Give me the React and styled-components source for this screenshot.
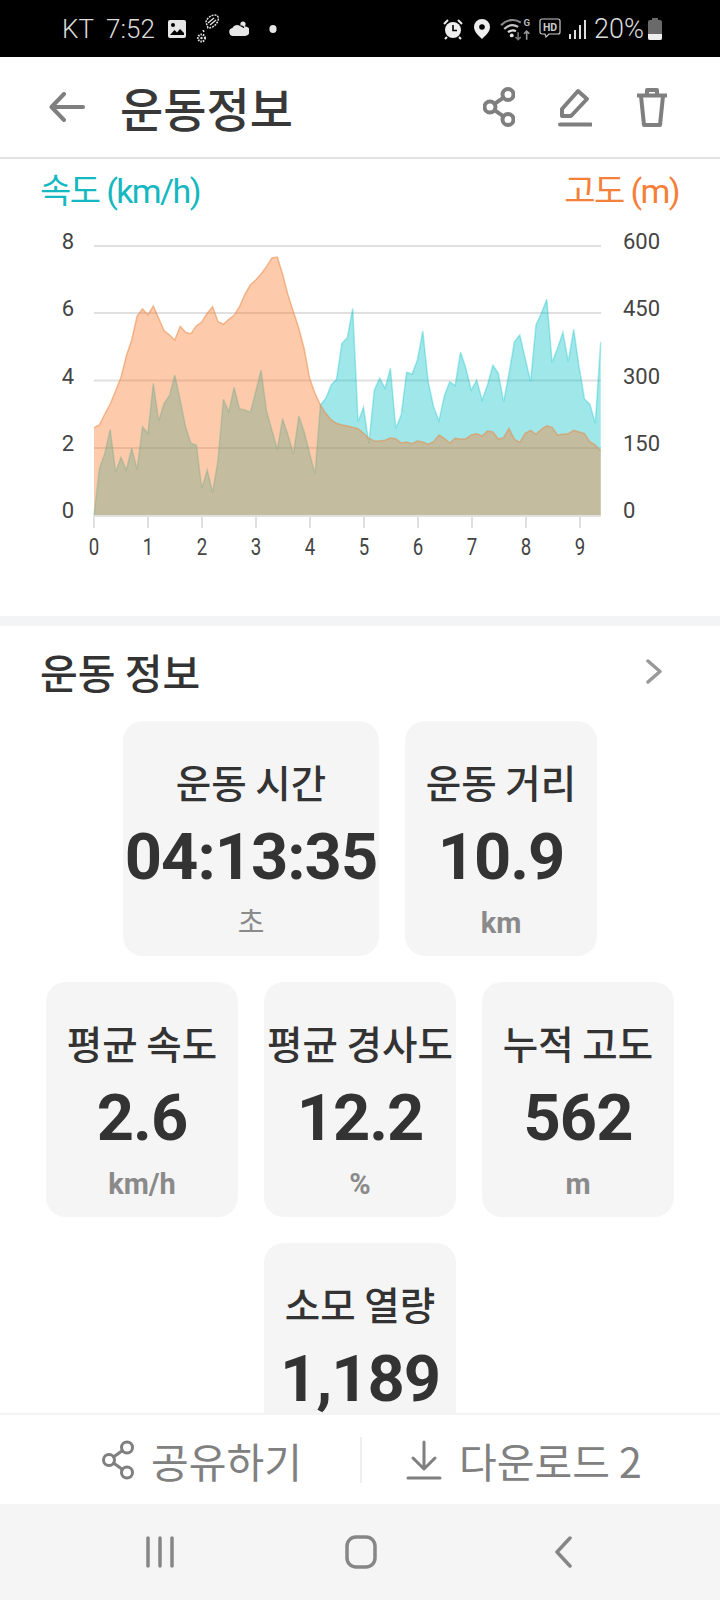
import React from "react";
import styled, { createGlobalStyle } from "styled-components";

const KR = `"Noto Sans CJK KR", "Noto Sans", sans-serif`;
const NUM = `Roboto, "Noto Sans CJK KR", sans-serif`;

const Global = createGlobalStyle`
  html, body { margin: 0; padding: 0; background: #fff; }
  * { box-sizing: border-box; }
`;

const Page = styled.div`
  width: 720px;
  height: 1600px;
  display: flex;
  flex-direction: column;
  overflow: hidden;
  font-family: ${KR};
  background: #fff;
`;

const StatusBar = styled.div`
  height: 57px;
  background: #000;
  color: #dcdcdc;
  display: flex;
  align-items: center;
  justify-content: space-between;
  padding: 0 58px 0 62px;
  flex: none;
`;
const StatusGroup = styled.div`
  display: flex;
  align-items: center;
  gap: ${(p) => p.$gap || 0}px;
  margin-left: ${(p) => p.$ml || 0}px;
`;
const StatusText = styled.span`
  font-family: ${NUM};
  font-size: ${(p) => p.$size || 26}px;
  font-weight: 300;
  line-height: 30px;
  white-space: pre;
`;
const StatusSpacer = styled.span`
  width: ${(p) => p.$w}px;
  flex: none;
`;

const Header = styled.header`
  height: 102px;
  flex: none;
  display: flex;
  align-items: center;
  padding: 0 51px 0 49px;
  border-bottom: 2px solid #e2e2e2;
`;
const HeaderTitle = styled.h1`
  margin: 0 0 0 35px;
  font-size: 47px;
  line-height: 60px;
  font-weight: 500;
  color: #383838;
  flex: 1;
`;
const HeaderActions = styled.div`
  display: flex;
  align-items: center;
  gap: 43px;
`;

const ChartSection = styled.section`
  flex: none;
  height: 457px;
  display: flex;
  flex-direction: column;
`;
const LegendRow = styled.div`
  height: 58px;
  padding: 5px 41px 0 40px;
  display: flex;
  justify-content: space-between;
  align-items: center;
`;
const LegendLabel = styled.span`
  font-family: ${NUM};
  font-size: 34px;
  line-height: 54px;
  font-weight: 400;
  letter-spacing: -1.6px;
  color: ${(p) => p.$color};
`;
const ChartSvg = styled.svg`
  display: block;
  width: 720px;
  height: 399px;
`;

const Gap = styled.div`
  height: 10px;
  flex: none;
  background: #f3f4f5;
`;

const Content = styled.main`
  flex: 1;
  min-height: 0;
  overflow: hidden;
`;
const SectionHead = styled.div`
  height: 95px;
  padding: 0 58px 5px 40px;
  display: flex;
  align-items: center;
  justify-content: space-between;
`;
const SectionTitle = styled.h2`
  margin: 0;
  font-size: 41px;
  line-height: 56px;
  font-weight: 500;
  color: #333;
`;
const Cards = styled.div`
  display: flex;
  flex-wrap: wrap;
  justify-content: center;
  gap: 26px;
  padding: 0 46px;
`;
const Card = styled.div`
  width: ${(p) => (p.$wide ? 256 : 192)}px;
  height: 235px;
  background: #f5f5f5;
  border-radius: 20px;
  display: flex;
  flex-direction: column;
  align-items: center;
  padding-top: 38px;
`;
const CardTitle = styled.div`
  font-size: 38.5px;
  line-height: 44px;
  font-weight: 500;
  color: #333;
  white-space: nowrap;
`;
const CardValue = styled.div`
  margin-top: 19px;
  font-family: ${NUM};
  font-size: 65px;
  line-height: 70px;
  font-weight: 700;
  color: #333;
  letter-spacing: -1px;
  white-space: nowrap;
`;
const CardUnit = styled.div`
  margin-top: 16px;
  font-family: ${NUM};
  font-size: 29px;
  line-height: 30px;
  font-weight: ${(p) => (p.$light ? 400 : 700)};
  color: #8a8a8a;
`;

const ActionBar = styled.div`
  flex: none;
  height: 91px;
  border-top: 2px solid #f3f3f3;
  display: grid;
  grid-template-columns: 360px 2px 1fr;
  align-items: center;
  background: #fff;
`;
const ActionButton = styled.div`
  display: flex;
  align-items: center;
  padding-left: ${(p) => p.$pad}px;
  gap: 17px;
  color: #808080;
  font-size: 41px;
  line-height: 56px;
`;
const ActionDivider = styled.div`
  width: 2px;
  height: 46px;
  background: #f0f0f0;
`;

const NavBar = styled.nav`
  flex: none;
  height: 96px;
  background: #f5f5f5;
  display: grid;
  grid-template-columns: 199px 209px auto;
  align-items: center;
  justify-content: start;
  padding: 0 0 0 146px;
`;

const teal = [1065,925,880,808,935,892,930,865,928,800,820,670,782,730,706,645,720,800,850,855,985,930,997,900,718,755,682,746,750,757,695,630,752,810,868,776,825,882,768,815,880,943,735,715,675,658,550,533,445,785,742,850,690,655,685,625,805,765,637,642,600,513,665,740,782,708,665,677,576,625,690,660,720,675,615,640,725,640,545,525,595,665,495,460,418,607,565,517,605,508,620,717,733,790,545];
const orange = [803,795,762,732,693,652,588,540,468,447,464,438,475,512,525,540,499,517,521,497,486,460,440,485,493,478,466,440,403,375,360,342,320,294,291,343,405,455,505,567,655,700,735,760,780,790,795,798,802,806,820,835,843,843,841,834,836,849,846,851,843,846,853,845,825,835,849,835,838,836,825,821,828,813,816,837,833,805,838,847,820,811,823,808,797,802,825,823,821,811,816,821,845,855,873];

const X0 = 94;
const STEP = 5.39;
const BASE = 516;
const toLine = (arr) => arr.map((z, i) => `${(X0 + i * STEP).toFixed(1)},${(160 + z / 3).toFixed(1)}`).join(" ");
const toArea = (arr) => `${X0},${BASE} ${toLine(arr)} ${(X0 + (arr.length - 1) * STEP).toFixed(1)},${BASE}`;

const gridY = [246, 313, 380.5, 448];
const leftLabels = [["8", 241], ["6", 308], ["4", 376], ["2", 443], ["0", 510]];
const rightLabels = [["600", 241], ["450", 308], ["300", 376], ["150", 443], ["0", 510]];

const Chart = () => (
  <ChartSvg viewBox="0 217 720 399">
    {gridY.map((y) => (
      <line key={y} x1={X0} x2={601} y1={y} y2={y} stroke="#e0e0e0" strokeWidth="2" />
    ))}
    <polygon points={toArea(teal)} fill="#11c3c8" fillOpacity="0.4" />
    <polyline points={toLine(teal)} fill="none" stroke="#11c3c8" strokeOpacity="0.35" strokeWidth="1.5" />
    <polygon points={toArea(orange)} fill="#fa7d2d" fillOpacity="0.4" />
    <polyline points={toLine(orange)} fill="none" stroke="#ea8a4a" strokeOpacity="0.55" strokeWidth="1.5" />
    <line x1={X0 - 1} x2={601} y1={516} y2={516} stroke="#e0e0e0" strokeWidth="2" />
    {Array.from({ length: 10 }, (_, i) => {
      const x = X0 + i * 54;
      return (
        <g key={i}>
          <line x1={x} x2={x} y1={516} y2={528} stroke="#e0e0e0" strokeWidth="2" />
          <text
            transform={`translate(${x} 555) scale(0.76 1)`}
            textAnchor="middle"
            fontFamily="Roboto"
            fontSize="24.5"
            fill="#444"
          >
            {i}
          </text>
        </g>
      );
    })}
    {leftLabels.map(([t, y]) => (
      <text key={t} x={74} y={y + 8} textAnchor="end" fontFamily="Roboto" fontSize="22" fill="#444">{t}</text>
    ))}
    {rightLabels.map(([t, y]) => (
      <text key={t} x={623} y={y + 8} fontFamily="Roboto" fontSize="22" fill="#444">{t}</text>
    ))}
  </ChartSvg>
);

const Ico = ({ w, h, children, sw = 4, c = "#7f7f7f", vb }) => (
  <svg width={w} height={h} viewBox={vb || `0 0 ${w} ${h}`} fill="none" stroke={c} strokeWidth={sw} strokeLinecap="round" strokeLinejoin="round" style={{ display: "block", flex: "none" }}>
    {children}
  </svg>
);

const ShareIcon = ({ sw = 4 }) => (
  <Ico w={32} h={40} sw={sw}>
    <circle cx="25" cy="7.5" r="5.5" />
    <circle cx="7" cy="20" r="5.5" />
    <circle cx="25" cy="32.5" r="5.5" />
    <path d="M20.5 10.6 11.5 16.9M11.5 23.1l9 6.3" />
  </Ico>
);

const StatusIcons = {
  Image: () => (
    <svg width="20" height="20" viewBox="0 0 20 20" style={{ display: "block" }}>
      <rect x="1" y="1" width="18" height="18" rx="2" fill="#e6e6e6" />
      <circle cx="6" cy="6" r="2" fill="#000" />
      <path d="M3 16l4.5-5 2.5 2.5 3-3.5L17 14v2z" fill="#000" />
    </svg>
  ),
  Shoe: () => (
    <svg width="24" height="30" viewBox="0 0 24 30" fill="none" style={{ display: "block" }}>
      <path d="M12 14 10 8c1-4 5-7 9-7 3 0 4 3 3 6-2 4-5 7-10 7z" stroke="#e0e0e0" strokeWidth="1.5" strokeDasharray="2 1" />
      <path d="M12 9l6-5M14 11l6-5" stroke="#e0e0e0" strokeWidth="1.4" />
      <circle cx="5.5" cy="24" r="3.5" stroke="#e0e0e0" strokeWidth="2" strokeDasharray="1.5 1" />
      <circle cx="5.5" cy="24" r="1.2" fill="#e0e0e0" />
      <path d="M7 16l1 2" stroke="#e0e0e0" strokeWidth="1.5" />
    </svg>
  ),
  Cloud: () => (
    <svg width="20" height="16" viewBox="0 0 20 16" style={{ display: "block" }}>
      <path d="M4 15a4 4 0 0 1-.6-7.9A5 5 0 0 1 11 5a3.6 3.6 0 0 1 5 .4A4.6 4.6 0 0 1 16 15z" fill="#e6e6e6" />
      <circle cx="14" cy="3" r="2.6" fill="#e6e6e6" />
      <path d="M11.5 4.8c1.5 0 3 1 3.2 2.2" stroke="#000" strokeWidth="1.2" fill="none" />
    </svg>
  ),
  Dot: () => (
    <svg width="8" height="10" viewBox="0 0 8 10" style={{ display: "block" }}>
      <ellipse cx="4" cy="5" rx="3.6" ry="4" fill="#e6e6e6" />
    </svg>
  ),
  Alarm: () => (
    <svg width="20" height="22" viewBox="0 0 20 22" style={{ display: "block" }}>
      <circle cx="10" cy="12" r="8" fill="#eee" />
      <path d="M10 7v5.5h4" stroke="#000" strokeWidth="1.6" fill="none" />
      <path d="M1 6l4-4M19 6l-4-4M4 19l-2 2M16 19l2 2" stroke="#eee" strokeWidth="2" />
    </svg>
  ),
  Pin: () => (
    <svg width="16" height="20" viewBox="0 0 16 20" style={{ display: "block" }}>
      <path fillRule="evenodd" d="M8 0a8 8 0 0 1 8 8c0 5-5 9-8 12-3-3-8-7-8-12a8 8 0 0 1 8-8zm0 5.2a2.8 2.8 0 1 0 0 5.6 2.8 2.8 0 0 0 0-5.6z" fill="#eee" />
    </svg>
  ),
  Wifi: () => (
    <svg width="32" height="26" viewBox="0 0 30 24" fill="none" style={{ display: "block" }}>
      <path d="M1 8.5C6 3 14 2 19.5 6" stroke="#8a8a8a" strokeWidth="2" />
      <path d="M4 12c4-4 9-4.5 13-2" stroke="#c8c8c8" strokeWidth="2" />
      <path d="M7.5 15c2.5-2 5-2.2 7.500-1" stroke="#e0e0e0" strokeWidth="2" />
      <circle cx="11" cy="18" r="1.8" fill="#e6e6e6" />
      <path d="M17 15v7m-2.5-2.5L17 22l2.500-2.500" stroke="#777" strokeWidth="1.5" />
      <path d="M25 22v-8m-2.5 2.5L25 14l2.500 2.500" stroke="#999" strokeWidth="1.5" />
      <text x="22" y="9" fontFamily="Roboto" fontSize="9" fontWeight="700" fill="#bbb">G</text>
    </svg>
  ),
  HD: () => (
    <svg width="22" height="24" viewBox="0 0 22 24" fill="none" style={{ display: "block" }}>
      <path d="M3 2h16a2 2 0 0 1 2 2v11a2 2 0 0 1-2 2H10l-3 3-1-3H3a2 2 0 0 1-2-2V4a2 2 0 0 1 2-2z" stroke="#ccc" strokeWidth="1.2" />
      <text x="11" y="13.5" textAnchor="middle" fontFamily="Roboto" fontSize="10.5" fontWeight="700" fill="#ccc">HD</text>
    </svg>
  ),
  Signal: () => (
    <svg width="18" height="20" viewBox="0 0 18 20" style={{ display: "block" }}>
      <rect x="0" y="15" width="2" height="5" fill="#ddd" />
      <rect x="5" y="11" width="2" height="9" fill="#ddd" />
      <rect x="10" y="6" width="2" height="14" fill="#ddd" />
      <rect x="15" y="1" width="2" height="19" fill="#ddd" />
    </svg>
  ),
  Battery: () => (
    <svg width="14" height="22" viewBox="0 0 14 22" style={{ display: "block" }}>
      <path d="M4 0h6v2h2a2 2 0 0 1 2 2v16a2 2 0 0 1-2 2H2a2 2 0 0 1-2-2V4a2 2 0 0 1 2-2h2z" fill="#6a6a6a" />
      <path d="M0 16h14v4a2 2 0 0 1-2 2H2a2 2 0 0 1-2-2z" fill="#eee" />
    </svg>
  ),
};

const CARDS = [
  { title: "운동 시간", value: "04:13:35", unit: "초", wide: true, light: true },
  { title: "운동 거리", value: "10.9", unit: "km" },
  { title: "평균 속도", value: "2.6", unit: "km/h" },
  { title: "평균 경사도", value: "12.2", unit: "%" },
  { title: "누적 고도", value: "562", unit: "m" },
  { title: "소모 열량", value: "1,189", unit: "kcal" },
];

export default function App() {
  return (
    <Page>
      <Global />
      <StatusBar>
        <StatusGroup>
          <StatusText>KT  7:52</StatusText>
          <StatusGroup $gap={9} $ml={12}>
            <StatusIcons.Image />
            <StatusIcons.Shoe />
            <StatusIcons.Cloud />
            <StatusSpacer $w={2} />
            <StatusIcons.Dot />
          </StatusGroup>
        </StatusGroup>
        <StatusGroup>
          <StatusIcons.Alarm />
          <StatusSpacer $w={11} />
          <StatusIcons.Pin />
          <StatusSpacer $w={10} />
          <StatusIcons.Wifi />
          <StatusSpacer $w={7} />
          <StatusIcons.HD />
          <StatusSpacer $w={8} />
          <StatusIcons.Signal />
          <StatusSpacer $w={7} />
          <StatusText $size={27}>20%</StatusText>
          <StatusSpacer $w={4} />
          <StatusIcons.Battery />
        </StatusGroup>
      </StatusBar>

      <Header>
        <Ico w={36} h={30} sw={4}>
          <path d="M34 15H3M15 2 2.5 15 15 28" />
        </Ico>
        <HeaderTitle>운동정보</HeaderTitle>
        <HeaderActions>
          <ShareIcon />
          <Ico w={34} h={40} sw={4}>
            <path d="M4 29v-7L20 4l9 8-16 17z" />
            <path d="M2 37.5h31" />
          </Ico>
          <Ico w={34} h={40} sw={4}>
            <path d="M2 8.5h30M12 8V3h10v5M6 9l3 29h16l3-29" strokeLinecap="butt" />
          </Ico>
        </HeaderActions>
      </Header>

      <ChartSection>
        <LegendRow>
          <LegendLabel $color="#14b8c0">속도 (km/h)</LegendLabel>
          <LegendLabel $color="#f5803a">고도 (m)</LegendLabel>
        </LegendRow>
        <Chart />
      </ChartSection>
      <Gap />

      <Content>
        <SectionHead>
          <SectionTitle>운동 정보</SectionTitle>
          <Ico w={16} h={25} sw={3.5} c="#999">
            <path d="M2 2l12 10.5L2 23" />
          </Ico>
        </SectionHead>
        <Cards>
          {CARDS.map((c) => (
            <Card key={c.title} $wide={c.wide}>
              <CardTitle>{c.title}</CardTitle>
              <CardValue>{c.value}</CardValue>
              <CardUnit $light={c.light}>{c.unit}</CardUnit>
            </Card>
          ))}
        </Cards>
      </Content>

      <ActionBar>
        <ActionButton $pad={102}>
          <ShareIcon sw={3} />
          <span>공유하기</span>
        </ActionButton>
        <ActionDivider />
        <ActionButton $pad={44}>
          <Ico w={36} h={40} sw={3}>
            <path d="M18 2v26M7 18l11 11 11-11M2 38h32" />
          </Ico>
          <span>다운로드 2</span>
        </ActionButton>
      </ActionBar>

      <NavBar>
        <Ico w={28} h={32} sw={3.5} c="#868686">
          <path d="M2 2v28M14 2v28M26 2v28" />
        </Ico>
        <Ico w={32} h={34} sw={3.5} c="#868686">
          <rect x="2" y="2" width="28" height="30" rx="9" />
        </Ico>
        <Ico w={18} h={32} sw={3.5} c="#868686">
          <path d="M16 2 3 16l13 14" />
        </Ico>
      </NavBar>
    </Page>
  );
}
